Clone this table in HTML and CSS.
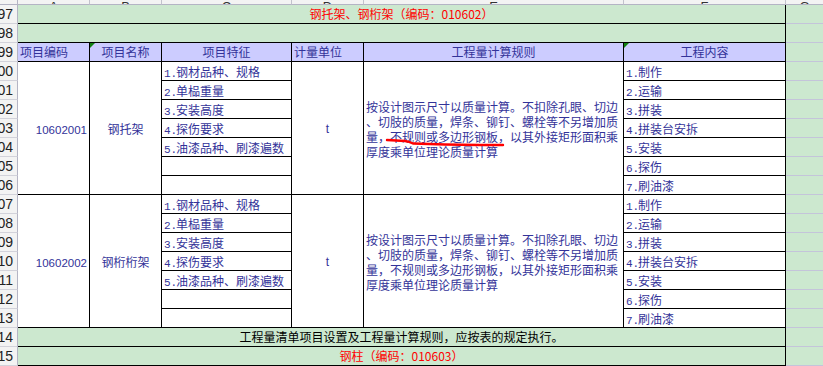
FILE: index.html
```html
<!DOCTYPE html>
<html lang="zh">
<head>
<meta charset="utf-8">
<title>钢托架、钢桁架</title>
<link rel="stylesheet" href="styles.css">
</head>
<body>
<div class="sheet">
  <!-- column header row -->
  <div class="ch corner"></div>
  <div class="ch"><span>A</span></div>
  <div class="ch"><span>B</span></div>
  <div class="ch"><span>C</span></div>
  <div class="ch"><span>D</span></div>
  <div class="ch"><span>E</span></div>
  <div class="ch"><span>F</span></div>
  <div class="ch last"><span>G</span></div>

  <!-- 97 -->
  <div class="rn">97</div>
  <div class="c green red wide center">钢托架、钢桁架（编码：010602）</div>
  <div class="g"></div>
  <!-- 98 -->
  <div class="rn">98</div>
  <div class="c green wide"></div>
  <div class="g"></div>
  <!-- 99 -->
  <div class="rn">99</div>
  <div class="c hd left">项目编码</div>
  <div class="c hd center"><i class="tri"></i>项目名称</div>
  <div class="c hd center">项目特征</div>
  <div class="c hd left">计量单位</div>
  <div class="c hd center">工程量计算规则</div>
  <div class="c hd center"><i class="tri"></i>工程内容</div>
  <div class="g"></div>

  <!-- 100-106 -->
  <div class="rn">100</div>
  <div class="c span7 num">10602001</div>
  <div class="c span7 mid">钢托架</div>
  <div class="c item"><span class="n">1.</span>钢材品种、规格</div>
  <div class="c span7 mid unit">t</div>
  <div class="c span7 rule"><p>按设计图示尺寸以质量计算。不扣除孔眼、切边<br>、切肢的质量，焊条、铆钉、螺栓等不另增加质<br>量，不规则或多边形钢板，以其外接矩形面积乘<br>厚度乘单位理论质量计算</p></div>
  <div class="c item"><span class="n">1.</span>制作</div>
  <div class="g"></div>

  <div class="rn">101</div>
  <div class="c item"><span class="n">2.</span>单榀重量</div>
  <div class="c item"><span class="n">2.</span>运输</div>
  <div class="g"></div>

  <div class="rn">102</div>
  <div class="c item"><span class="n">3.</span>安装高度</div>
  <div class="c item"><span class="n">3.</span>拼装</div>
  <div class="g"></div>

  <div class="rn">103</div>
  <div class="c item"><span class="n">4.</span>探伤要求</div>
  <div class="c item"><span class="n">4.</span>拼装台安拆</div>
  <div class="g"></div>

  <div class="rn">104</div>
  <div class="c item"><span class="n">5.</span>油漆品种、刷漆遍数</div>
  <div class="c item"><span class="n">5.</span>安装</div>
  <div class="g"></div>

  <div class="rn">105</div>
  <div class="c item"></div>
  <div class="c item"><span class="n">6.</span>探伤</div>
  <div class="g"></div>

  <div class="rn">106</div>
  <div class="c item"></div>
  <div class="c item"><span class="n">7.</span>刷油漆</div>
  <div class="g"></div>

  <!-- 107-113 -->
  <div class="rn">107</div>
  <div class="c span7 num">10602002</div>
  <div class="c span7 mid">钢桁桁架</div>
  <div class="c item"><span class="n">1.</span>钢材品种、规格</div>
  <div class="c span7 mid unit">t</div>
  <div class="c span7 rule"><p>按设计图示尺寸以质量计算。不扣除孔眼、切边<br>、切肢的质量，焊条、铆钉、螺栓等不另增加质<br>量，不规则或多边形钢板，以其外接矩形面积乘<br>厚度乘单位理论质量计算</p></div>
  <div class="c item"><span class="n">1.</span>制作</div>
  <div class="g"></div>

  <div class="rn">108</div>
  <div class="c item"><span class="n">2.</span>单榀重量</div>
  <div class="c item"><span class="n">2.</span>运输</div>
  <div class="g"></div>

  <div class="rn">109</div>
  <div class="c item"><span class="n">3.</span>安装高度</div>
  <div class="c item"><span class="n">3.</span>拼装</div>
  <div class="g"></div>

  <div class="rn">110</div>
  <div class="c item"><span class="n">4.</span>探伤要求</div>
  <div class="c item"><span class="n">4.</span>拼装台安拆</div>
  <div class="g"></div>

  <div class="rn">111</div>
  <div class="c item"><span class="n">5.</span>油漆品种、刷漆遍数</div>
  <div class="c item"><span class="n">5.</span>安装</div>
  <div class="g"></div>

  <div class="rn">112</div>
  <div class="c item"></div>
  <div class="c item"><span class="n">6.</span>探伤</div>
  <div class="g"></div>

  <div class="rn">113</div>
  <div class="c item"></div>
  <div class="c item"><span class="n">7.</span>刷油漆</div>
  <div class="g"></div>

  <!-- 114 -->
  <div class="rn">114</div>
  <div class="c green black wide center">工程量清单项目设置及工程量计算规则，应按表的规定执行。</div>
  <div class="g"></div>
  <!-- 115 -->
  <div class="rn">115</div>
  <div class="c green red wide center">钢柱（编码：010603）</div>
  <div class="g"></div>
</div>

<svg class="scribble" width="124" height="14" viewBox="0 0 124 14">
  <path d="M2 4 L20 5 Q24 5.5 28 7.5 L60 8.5 L95 9 L118 9" fill="none" stroke="#ff0000" stroke-width="2.4" stroke-linecap="round" stroke-linejoin="round"/>
</svg>
</body>
</html>
```

FILE: styles.css
```css
html, body {
  margin: 0;
  padding: 0;
  background: #ffffff;
  overflow: hidden;
}

body {
  width: 823px;
  height: 366px;
  position: relative;
  font-family: "Noto Sans CJK SC", "Noto Sans", sans-serif;
  font-size: 12px;
}

.sheet {
  display: grid;
  grid-template-columns: 18px 72px 72px 130px 72px 260px 162px 1fr;
  grid-template-rows: 5px repeat(19, 19px);
  width: 823px;
}

.sheet > div {
  box-sizing: border-box;
  min-width: 0;
  white-space: nowrap;
}

/* column header strip */
.ch {
  background: #f3f3f3;
  border-right: 1px solid #c2c2cc;
  border-bottom: 1px solid #b4b4c4;
  overflow: hidden;
  display: flex;
  justify-content: center;
  align-items: flex-end;
  color: #333;
  font-family: "Liberation Sans", sans-serif;
  font-size: 13px;
}
.ch span {
  line-height: 13px;
  margin-bottom: -9px;
}
.ch.corner { border-right-color: #b4b4c4; }
.ch.last { border-right: none; }

/* row numbers */
.rn {
  background: #f3f3f3;
  border-right: 1px solid #b4b4c4;
  border-bottom: 1px solid #d2d2da;
  display: flex;
  justify-content: flex-end;
  align-items: center;
  padding-right: 4px;
  font-family: "Liberation Sans", sans-serif;
  font-size: 14px;
  color: #222;
  overflow: visible;
}

/* spreadsheet cells */
.c {
  position: relative;
  background: #ffffff;
  border-right: 1px solid #000;
  border-bottom: 1px solid #000;
  color: #333399;
  line-height: 18px;
  padding: 0 2px;
}

.wide { grid-column: span 6; }
.span7 { grid-row: span 7; }

.green { background: #cce8cf; }
.red { color: #ff0000; }
.black { color: #000000; }

.center { text-align: center; }
.left { text-align: left; }

.hd { background: #ccccff; }

.num {
  display: flex;
  align-items: center;
  justify-content: flex-end;
  font-family: "Liberation Sans", sans-serif;
  font-size: 11.5px;
  padding-top: 3px;
}

.mid {
  display: flex;
  align-items: center;
  justify-content: center;
  padding-top: 2px;
}

.unit {
  font-family: "Liberation Sans", sans-serif;
  font-size: 12px;
}

.rule {
  display: flex;
  align-items: center;
  padding-top: 2px;
}
.rule p {
  margin: 0;
  line-height: 15px;
}

.item {
  line-height: 19px;
  padding-top: 0;
}
.item .n {
  display: inline-block;
  width: 12px;
  font-family: "Liberation Mono", monospace;
  font-size: 11px;
}

/* outside column G */
.g {
  background: #cce8cf;
  border-bottom: 1px solid #c4c4da;
}

/* comment indicator */
.tri {
  position: absolute;
  left: 0;
  top: 0;
  width: 0;
  height: 0;
  border-top: 5px solid #108010;
  border-right: 5px solid transparent;
}

/* hand-drawn red mark */
.scribble {
  position: absolute;
  left: 385px;
  top: 136px;
}
```
